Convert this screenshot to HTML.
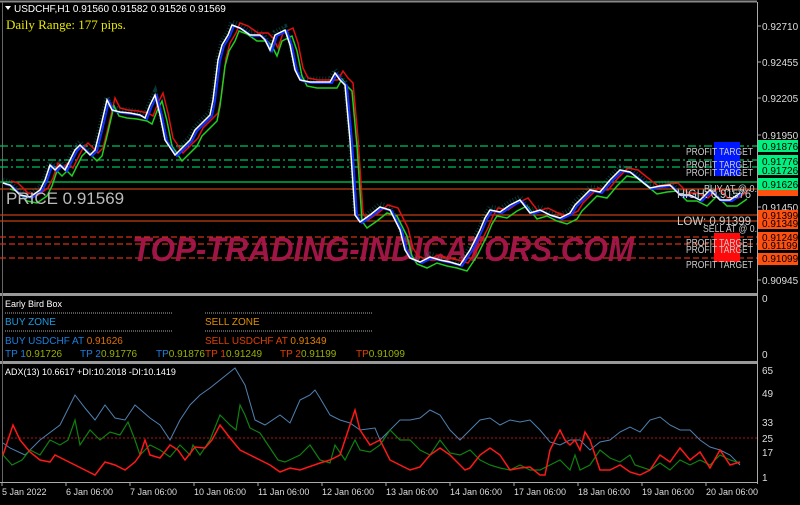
<!DOCTYPE html>
<html><head><meta charset="utf-8"><style>
body{margin:0;background:#000;width:800px;height:500px;overflow:hidden;font-family:"Liberation Sans",sans-serif}
</style></head><body>
<svg width="800" height="500" xmlns="http://www.w3.org/2000/svg" font-family="Liberation Sans, sans-serif">
<defs><clipPath id="c"><rect x="0" y="0" width="757" height="293"/></clipPath>
<polyline id="p" fill="none" points="3,183 10,185 20,195 30,197 40,190 45,180 50,165 55,170 60,165 65,170 75,150 80,145 90,155 95,150 100,130 107,100 112,110 120,112 130,113 140,115 145,118 150,105 155,95 160,115 165,140 175,155 180,150 190,140 195,130 200,125 210,115 213,100 218,60 222,45 228,35 232,25 240,28 250,35 260,35 265,40 270,50 275,35 285,30 290,45 295,70 300,80 310,82 330,82 335,73 340,80 345,85 350,140 355,215 360,222 370,215 380,207 390,210 400,230 405,250 410,258 420,262 430,257 440,260 450,262 460,265 470,250 480,230 485,218 490,210 500,212 510,205 520,200 530,213 540,210 550,215 560,218 570,213 575,205 580,200 590,190 600,192 610,180 620,170 630,172 640,180 650,188 660,186 670,185 680,195 690,195 700,200 710,190 720,200 730,200 740,193"/></defs>
<rect width="800" height="500" fill="#000"/>
<line x1="0" y1="1.5" x2="757" y2="1.5" stroke="#888" stroke-width="2"/>
<line x1="757.5" y1="2" x2="757.5" y2="484" stroke="#aaa"/>
<rect x="0" y="293" width="757" height="3" fill="#999"/>
<rect x="0" y="361" width="757" height="3" fill="#999"/>
<line x1="0" y1="482.5" x2="757" y2="482.5" stroke="#aaa"/>
<line x1="2.5" y1="2" x2="2.5" y2="482" stroke="#666"/>
<g fill="#ddd" font-size="10">
<text x="762" y="30">0.92710</text><text x="762" y="66">0.92455</text><text x="762" y="102">0.92205</text><text x="762" y="139">0.91950</text><text x="762" y="211">0.91450</text><text x="762" y="284">0.90945</text>
<text x="762" y="302">0</text><text x="762" y="358">0</text>
<text x="762" y="374">65</text><text x="762" y="397">49</text><text x="762" y="426">33</text><text x="762" y="442">25</text><text x="762" y="456">17</text><text x="762" y="481">1</text>
</g>
<g stroke="#aaa"><line x1="757" y1="26" x2="761" y2="26"/><line x1="757" y1="62" x2="761" y2="62"/><line x1="757" y1="98" x2="761" y2="98"/><line x1="757" y1="135" x2="761" y2="135"/><line x1="757" y1="207" x2="761" y2="207"/><line x1="757" y1="280" x2="761" y2="280"/></g>
<g clip-path="url(#c)">
<g stroke-width="1.2">
<line x1="0" y1="146" x2="757" y2="146" stroke="#00c060" stroke-dasharray="8,3,2,3"/>
<line x1="0" y1="160" x2="757" y2="160" stroke="#00c060" stroke-dasharray="8,3,2,3"/>
<line x1="0" y1="167" x2="757" y2="167" stroke="#00c060" stroke-dasharray="8,3,2,3"/>
<line x1="0" y1="182" x2="757" y2="182" stroke="#00d050"/>
<line x1="0" y1="189" x2="757" y2="189" stroke="#c04010"/>
<line x1="0" y1="215" x2="757" y2="215" stroke="#c04010"/>
<line x1="0" y1="221" x2="757" y2="221" stroke="#c04010"/>
<line x1="0" y1="237" x2="757" y2="237" stroke="#d03010" stroke-dasharray="6,3"/>
<line x1="0" y1="244" x2="757" y2="244" stroke="#d03010" stroke-dasharray="6,3"/>
<line x1="0" y1="258" x2="757" y2="258" stroke="#d03010" stroke-dasharray="6,3"/>
</g>
<rect x="714" y="142" width="26" height="34" fill="#0018ff"/>
<rect x="714" y="233" width="26" height="29" fill="#ff0a0a"/>
<text x="132" y="261" font-size="34" font-weight="bold" font-style="italic" fill="#a8174a" fill-opacity="0.95" textLength="502" lengthAdjust="spacingAndGlyphs">TOP-TRADING-INDICATORS.COM</text>
<g stroke-width="1.5">
<use href="#p" stroke="#10b8b0" stroke-width="5" opacity="0.3" stroke-dasharray="1,2" transform="translate(0,-3)"/>
<use href="#p" stroke="#e01010" transform="translate(8,-2)"/>
<use href="#p" stroke="#20d020" transform="translate(7,6)"/>
<use href="#p" stroke="#1030ff" stroke-width="2" transform="translate(2,1)"/>
<use href="#p" stroke="#fff"/>
</g>
<g fill="#ccc" font-size="10">
<text x="686" y="155" textLength="67" lengthAdjust="spacingAndGlyphs">PROFIT TARGET</text><text x="686" y="168" textLength="67" lengthAdjust="spacingAndGlyphs">PROFIT TARGET</text><text x="686" y="176" textLength="67" lengthAdjust="spacingAndGlyphs">PROFIT TARGET</text>
<text x="704" y="192" textLength="53" lengthAdjust="spacingAndGlyphs">BUY AT @ 0.</text><text x="677" y="198" font-size="12" textLength="74" lengthAdjust="spacingAndGlyphs">HIGH: 0.91576</text>
<text x="677" y="225" font-size="12" textLength="74" lengthAdjust="spacingAndGlyphs">LOW: 0.91399</text><text x="703" y="232" textLength="54" lengthAdjust="spacingAndGlyphs">SELL AT @ 0.</text>
<text x="686" y="246" textLength="67" lengthAdjust="spacingAndGlyphs">PROFIT TARGET</text><text x="686" y="253" textLength="67" lengthAdjust="spacingAndGlyphs">PROFIT TARGET</text><text x="686" y="268" textLength="67" lengthAdjust="spacingAndGlyphs">PROFIT TARGET</text>
<text x="6" y="204" font-size="17" fill="#bbb">PRICE 0.91569</text>
</g>
</g>
<g font-size="10">
<rect x="758" y="140" width="40" height="12" fill="#00f080"/><text x="762" y="150" fill="#000">0.91876</text>
<rect x="758" y="155" width="40" height="20" fill="#00f080"/><text x="762" y="165" fill="#000">0.91776</text><text x="762" y="174" fill="#000">0.91726</text>
<rect x="758" y="178" width="40" height="12" fill="#00f080"/><text x="762" y="188" fill="#000">0.91626</text>
<rect x="758" y="190" width="40" height="6" fill="#ff5010"/>
<rect x="758" y="210" width="40" height="19" fill="#ff5010"/><text x="762" y="219" fill="#000">0.91399</text><text x="762" y="227" fill="#000">0.91349</text>
<rect x="758" y="232" width="40" height="18" fill="#ff5010"/><text x="762" y="241" fill="#000">0.91249</text><text x="762" y="249" fill="#000">0.91199</text>
<rect x="758" y="253" width="40" height="12" fill="#ff5010"/><text x="762" y="262" fill="#000">0.91099</text>
</g>
<path d="M5,6 L11,6 L8,10Z" fill="#fff"/>
<text x="14" y="12" font-size="10" fill="#fff">USDCHF,H1  0.91560 0.91582 0.91526 0.91569</text>
<text x="6" y="29" font-size="13" fill="#e8e800" font-family="Liberation Serif, serif">Daily Range: 177 pips.</text>
<g font-size="10">
<text x="5" y="307" fill="#fff" font-size="9">Early Bird Box</text>
<line x1="5" y1="313" x2="173" y2="313" stroke="#aaa" stroke-dasharray="1,1"/>
<line x1="205" y1="313" x2="373" y2="313" stroke="#aaa" stroke-dasharray="1,1"/>
<line x1="5" y1="331" x2="173" y2="331" stroke="#aaa" stroke-dasharray="1,1"/>
<line x1="205" y1="331" x2="373" y2="331" stroke="#aaa" stroke-dasharray="1,1"/>
<text x="5" y="325" fill="#1a9ae0">BUY ZONE</text><text x="205" y="325" fill="#e09000">SELL ZONE</text>
<text x="5" y="344" fill="#1a80e0">BUY USDCHF AT <tspan fill="#e07000">0.91626</tspan></text>
<text x="205" y="344" fill="#e04000">SELL USDCHF AT <tspan fill="#e08000">0.91349</tspan></text>
<text x="5" y="357" fill="#1a80e0">TP 1<tspan fill="#9ab000">0.91726</tspan></text>
<text x="80" y="357" fill="#1a80e0">TP 2<tspan fill="#9ab000">0.91776</tspan></text>
<text x="156" y="357" fill="#1a80e0">TP<tspan fill="#9ab000">0.91876</tspan></text>
<text x="205" y="357" fill="#e04000">TP 1<tspan fill="#9ab000">0.91249</tspan></text>
<text x="280" y="357" fill="#e04000">TP 2<tspan fill="#9ab000">0.91199</tspan></text>
<text x="356" y="357" fill="#e04000">TP<tspan fill="#9ab000">0.91099</tspan></text>
</g>
<text x="5" y="375" font-size="9" fill="#fff">ADX(13) 10.6617 +DI:10.2018 -DI:10.1419</text>
<line x1="3" y1="438" x2="757" y2="438" stroke="#b01010" stroke-dasharray="2,2"/>
<polyline fill="none" stroke="#5080b0" points="3,443 10,448 25,455 40,440 60,425 75,395 85,408 95,420 105,405 115,418 125,420 135,405 150,418 160,425 170,440 180,420 190,405 200,395 210,388 220,380 235,368 245,385 255,420 265,425 280,415 290,423 300,400 310,395 315,390 320,398 330,415 340,420 350,423 360,430 375,428 380,440 390,430 400,420 410,420 420,418 430,410 440,415 450,430 460,440 470,430 480,420 490,418 500,425 510,420 520,422 530,420 540,430 550,442 560,445 570,440 580,440 590,450 600,442 610,440 620,432 630,427 640,432 650,420 660,417 670,425 680,430 690,430 700,440 710,447 720,450 730,455 740,465"/>
<polyline fill="none" stroke="#108010" stroke-width="1.2" points="3,455 12,465 22,460 30,450 40,455 50,440 60,445 68,440 75,420 80,445 90,430 100,440 110,432 120,435 128,422 135,440 140,455 150,445 160,450 170,457 180,445 190,455 193,445 200,455 210,440 220,415 225,420 230,425 236,430 240,405 245,415 250,428 260,433 270,448 278,460 285,462 300,455 310,445 320,460 330,463 335,445 345,460 350,450 355,440 360,450 370,452 380,445 390,430 400,440 410,440 420,450 430,455 440,440 450,453 460,455 470,450 480,460 490,465 500,468 510,470 520,465 530,470 540,470 550,465 560,460 570,470 575,455 580,470 590,465 600,450 610,458 620,462 630,455 635,465 650,470 660,463 670,470 680,460 690,465 700,460 710,465 720,455 730,460 740,463"/>
<polyline fill="none" stroke="#ff1818" stroke-width="1.5" points="3,455 13,425 20,440 30,452 40,460 50,462 55,455 65,460 75,465 85,470 95,475 105,462 115,465 125,470 135,462 140,455 145,440 150,455 160,458 170,445 178,450 185,460 195,447 205,448 212,440 220,425 230,438 240,450 250,455 260,460 270,465 280,472 290,468 300,470 320,463 330,460 340,455 350,425 355,410 360,430 370,445 380,440 390,460 400,465 410,470 420,467 430,455 440,448 450,455 460,465 465,470 470,468 480,455 490,448 500,455 510,470 520,468 530,467 540,475 545,475 550,450 555,440 560,430 565,440 570,445 575,440 580,450 585,432 590,440 600,470 610,470 620,465 630,472 640,475 650,470 660,455 670,462 680,448 690,460 700,452 710,468 720,450 730,465 740,462"/>
<g fill="#ddd" font-size="9">
<text x="2" y="495">5 Jan 2022</text><text x="66" y="495">6 Jan 06:00</text><text x="130" y="495">7 Jan 06:00</text><text x="194" y="495">10 Jan 06:00</text><text x="258" y="495">11 Jan 06:00</text><text x="322" y="495">12 Jan 06:00</text><text x="386" y="495">13 Jan 06:00</text><text x="450" y="495">14 Jan 06:00</text><text x="514" y="495">17 Jan 06:00</text><text x="578" y="495">18 Jan 06:00</text><text x="642" y="495">19 Jan 06:00</text><text x="706" y="495">20 Jan 06:00</text>
</g>
<g stroke="#aaa"><line x1="2" y1="482" x2="2" y2="486"/><line x1="66" y1="482" x2="66" y2="486"/><line x1="130" y1="482" x2="130" y2="486"/><line x1="194" y1="482" x2="194" y2="486"/><line x1="258" y1="482" x2="258" y2="486"/><line x1="322" y1="482" x2="322" y2="486"/><line x1="386" y1="482" x2="386" y2="486"/><line x1="450" y1="482" x2="450" y2="486"/><line x1="514" y1="482" x2="514" y2="486"/><line x1="578" y1="482" x2="578" y2="486"/><line x1="642" y1="482" x2="642" y2="486"/><line x1="706" y1="482" x2="706" y2="486"/></g>
</svg>
</body></html>
